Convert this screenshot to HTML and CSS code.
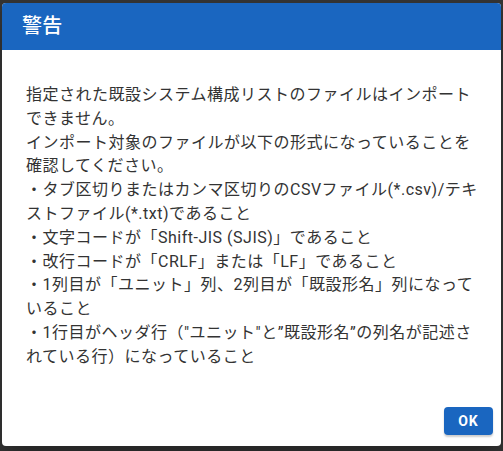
FILE: index.html
```html
<!DOCTYPE html>
<html lang="ja">
<head>
<meta charset="utf-8">
<link rel="stylesheet" href="styles.css">
</head>
<body>
<div class="dialog">
  <div class="dialog-title">警告</div>
  <div class="dialog-text">指定された既設システム構成リストのファイルはインポートできません。<br>インポート対象のファイルが以下の形式になっていることを確認してください。<br>・タブ区切りまたはカンマ区切りのCSVファイル(*.csv)/テキストファイル(*.txt)であること<br>・文字コードが「Shift-JIS (SJIS)」であること<br>・改行コードが「CRLF」または「LF」であること<br>・1列目が「ユニット」列、2列目が「既設形名」列になっていること<br>・1行目がヘッダ行（"ユニット"と”既設形名”の列名が記述されている行）になっていること</div>
  <div class="dialog-actions">
    <button class="btn-ok">OK</button>
  </div>
</div>
</body>
</html>
```
FILE: styles.css
```css
html, body {
  margin: 0;
  padding: 0;
}
body {
  width: 503px;
  height: 451px;
  background: #343434;
  overflow: hidden;
  font-family: Roboto, "Noto Sans CJK JP", sans-serif;
}
.dialog {
  margin: 3px 0 0 2px;
  width: 499px;
  height: 443px;
  background: #ffffff;
  border-radius: 4px;
  overflow: hidden;
  display: flex;
  flex-direction: column;
  box-shadow: 0 11px 15px -7px rgba(0,0,0,.2), 0 24px 38px 3px rgba(0,0,0,.14);
}
.dialog-title {
  height: 47px;
  background: #1a66c0;
  color: #ffffff;
  font-size: 20px;
  font-weight: 500;
  line-height: 47px;
  padding: 0 20px;
  letter-spacing: 0.2px;
}
.dialog-text {
  flex: 1;
  padding: 33px 16px 0 24px;
  font-size: 16px;
  line-height: 23.8px;
  letter-spacing: 0.5px;
  color: #333333;
}
.dialog-actions {
  display: flex;
  justify-content: flex-end;
  padding: 0 8px 11px 8px;
}
.btn-ok {
  width: 49px;
  height: 28px;
  border: none;
  border-radius: 4px;
  background: #1a66c0;
  color: #ffffff;
  font-family: Roboto, sans-serif;
  font-size: 14px;
  font-weight: 700;
  letter-spacing: 1px;
  padding: 0;
  box-shadow: 0 2px 2px rgba(0,0,0,.2);
}
```
